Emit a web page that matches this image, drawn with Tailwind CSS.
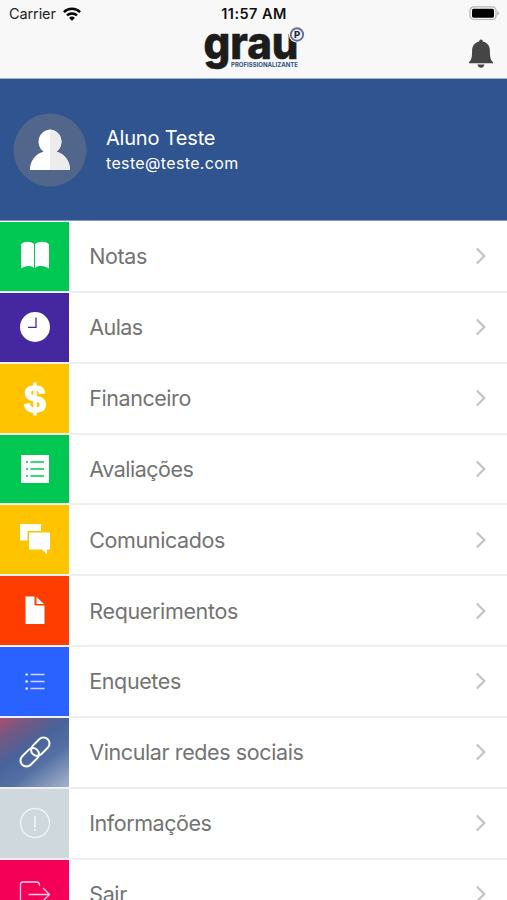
<!DOCTYPE html>
<html lang="pt-BR">
<head>
<meta charset="utf-8">
<meta name="viewport" content="width=device-width, initial-scale=1">
<title>Grau Profissionalizante</title>
<script src="https://cdn.jsdelivr.net/npm/@tailwindcss/browser@4"></script>
</head>
<body class="h-[900px] w-[507px] overflow-hidden bg-white font-['Inter','Liberation_Sans',sans-serif]">
<div class="flex h-[900px] flex-col overflow-hidden">
  <header class="h-[79px] shrink-0 border-b border-[#a3b2cb] bg-[#f8f8f8]">
    <div class="grid h-[27px] grid-cols-3 items-center pr-2 pl-[9px] text-[#111]">
      <div class="flex items-center gap-[7px] text-[14.5px] text-[#222]">
        <span class="tracking-[-0.1px]">Carrier</span>
        <svg class="h-[14px] w-[18px]" viewBox="0 0 18 14" fill="none" stroke="#050505" stroke-width="2.5"><path d="M.9 5.1a11.6 11.6 0 0 1 16.2 0"/><path d="M4 8.4a7.2 7.2 0 0 1 10 0"/><path d="M9 13.7 6.1 10.9a4.2 4.2 0 0 1 5.8 0z" fill="#050505" stroke="none"/></svg>
      </div>
      <span class="text-center text-[14.5px] leading-[18px] font-semibold whitespace-nowrap tracking-[0.45px]">11:57 AM</span>
      <svg class="h-[15px] w-[31px] justify-self-end" viewBox="0 0 31 15"><rect x="2" y=".9" width="26" height="12.6" rx="3.6" fill="#f8f8f8" stroke="#b5b5b5" stroke-width="1.2"/><rect x="4" y="2.7" width="22" height="9" rx="1.6" fill="#000"/><path d="M29.2 5v4.600q1.700-.8 1.700-2.300T29.200 5z" fill="#b5b5b5"/></svg>
    </div>
    <div class="grid h-[51px] grid-cols-[1fr_102px_1fr]">
      <span></span>
      <svg class="h-[46px] w-[102px] overflow-visible" viewBox="0 0 102 46">
        <text x="0.5" y="32.4" textLength="95" lengthAdjust="spacingAndGlyphs" font-family="Inter" font-weight="800" font-size="45" fill="#1c1c1b" stroke="#1c1c1b" stroke-width=".6" stroke-linejoin="round">grau</text>
        <text x="28" y="39.5" textLength="67" lengthAdjust="spacingAndGlyphs" font-family="Inter" font-weight="700" font-size="6.2" fill="#2c5278">PROFISSIONALIZANTE</text>
        <circle cx="94" cy="7.5" r="8.1" fill="#f8f8f8"/><circle cx="94" cy="7.5" r="6.2" fill="#eceef4" stroke="#626f9d" stroke-width="1.9"/>
        <text x="94.2" y="11" text-anchor="middle" font-family="Inter" font-weight="800" font-size="9.5" fill="#242b42">P</text>
      </svg>
      <svg class="mt-3 mr-[13px] h-[30px] w-[26px] justify-self-end" viewBox="0 0 26 30" fill="#454545"><path d="M13 .5c1.1 0 1.8.8 1.8 1.9 4.7 1.1 7.1 4.5 7.1 9.2 0 6.7.6 9.6 3.1 11.7v.9H1v-.9c2.5-2.1 3.1-5 3.1-11.7 0-4.7 2.4-8.1 7.1-9.2C11.2 1.3 11.9.5 13 .5z"/><path d="M9.5 25.5h7c-.3 2-1.5 3.2-3.5 3.2s-3.2-1.2-3.500-3.200z"/></svg>
    </div>
  </header>

  <section class="flex h-[142px] shrink-0 items-center border-b border-[#8299c2] bg-[#305490] pl-[13px] text-white">
    <svg class="size-[74px] shrink-0" viewBox="0 0 74 74"><circle cx="37" cy="37" r="36.5" fill="#52658a"/><path d="M37 16.5a11.6 12.2 0 0 1 6.5 22.2C52 41 57 48 57 57H17c0-9 5-16 13.500-18.300A11.600 12.200 0 0 1 37 16.500z" fill="#fff"/><path d="M37 16.500a11.600 12.200 0 0 1 6.500 22.200C52 41 57 48 57 57H37z" fill="#ececec"/></svg>
    <div class="ml-[19px] pt-[1px]">
      <p class="text-[20px] leading-[27px] tracking-[-0.2px]">Aluno Teste</p>
      <p class="text-[16px] leading-[23px] tracking-[0.35px]">teste@teste.com</p>
    </div>
  </section>

  <nav id="menu" class="flex shrink-0 flex-col pt-[1px] text-[21.5px] text-[#737373]"></nav>
</div>
<script>
const items = [
  ['Notas', 'bg-[#00c853]', 'tracking-[-0.4px]', '<path fill="#fff" d="M21 22.500c2-3.300 9-4 13-.5V46c-3-3-9-2.500-13 .5zM35 22c4-3.500 12-2.800 14 .5v24c-4-3-11-3.500-14-.5z"/>'],
  ['Aulas', 'bg-[#4527a0]', 'tracking-[-0.6px]', '<circle cx="35" cy="34" r="15" fill="#fff"/><path d="M36 24.500v9.800H28" fill="none" stroke="#4527a0" stroke-width="1.300"/>'],
  ['Financeiro', 'bg-[#ffc400]', 'tracking-[-0.45px]', '<text x="35" y="47.800" text-anchor="middle" font-family="Liberation Sans" font-weight="700" font-size="39" fill="#fff" stroke="#fff" stroke-width="1.200">$</text>'],
  ['Avaliações', 'bg-[#00c853]', 'tracking-[-0.5px]', '<path fill="#fff" d="M21 20h28v28H21z"/><path d="M30.500 27H44M30.500 34H44M30.500 41H44M26 27h2M26 34h2M26 41h2" stroke="#00c853" stroke-width="1.300"/>'],
  ['Comunicados', 'bg-[#ffc400]', 'tracking-[-0.4px]', '<path fill="#fff" d="M20 19h21v7H27.500v9.500H20zM29 27.500h21v17h-3v5l-5-5H29z"/>'],
  ['Requerimentos', 'bg-[#ff3d00]', 'tracking-[-0.35px]', '<path fill="#fff" d="M25.500 20.500h9v9h10v18.500h-19zM36.500 21l7.500 7h-7.500z"/>'],
  ['Enquetes', 'bg-[#2962ff]', 'tracking-[-0.4px]', '<path d="M30.500 27.500H44.500M30.500 34.500H44.500M30.500 41.500H44.500" stroke="#cbd7ff" stroke-width="1.300"/><path d="M25.500 27.500h2.300M25.500 34.500h2.300M25.500 41.500h2.300" stroke="#fff" stroke-width="2"/>'],
  ['Vincular redes sociais', 'bg-[linear-gradient(145deg,#a94f6c_0%,#79577f_16%,#48639b_42%,#5470a3_64%,#a7b5cc_100%)]', 'tracking-[-0.4px]', '<g fill="none" stroke="#fff" stroke-width="2" transform="rotate(-45 35 34)"><rect x="17" y="28" width="21" height="12" rx="6"/><rect x="32" y="28" width="21" height="12" rx="6"/></g>'],
  ['Informações', 'bg-[#cfd8dc]', 'tracking-[-0.45px]', '<circle cx="35" cy="34" r="14.500" fill="none" stroke="#edf4f6" stroke-width="1.400"/><path d="M35 27v11.500M35 40v2" stroke="#f4f8f9" stroke-width="1.500"/>'],
  ['Sair', 'bg-[#f50057]', 'tracking-[-0.4px]', '<path d="M39.500 26v-1q0-3-3-3H23q-2.500 0-2.500 2.500v20q0 2.500 2.500 2.500h13.500q3 0 3-3v-1M28.500 34.500H49M43 28l6.500 6.500L43 41" fill="none" stroke="#ffd0e0" stroke-width="1.300"/>']
];
document.getElementById('menu').innerHTML = items.map(([label, color, spacing, icon]) => `
  <a class="flex h-[70.85px] shrink-0 items-center border-b-[2.25px] border-[#efefef]">
    <span class="h-full w-[69.3px] shrink-0 ${color}"><svg class="h-[68.6px] w-[69.3px]" viewBox="0 0 69.3 68.6">${icon}</svg></span>
    <span class="ml-[20px] flex-1 whitespace-nowrap ${spacing}">${label}</span>
    <svg class="mr-[20px] h-[18px] w-[12px]" viewBox="0 0 12 18" fill="none" stroke="#c4c4c7" stroke-width="2.3"><path d="m1.800 1.500 7.500 7.500-7.500 7.500"/></svg>
  </a>`).join('');
</script>
</body>
</html>
